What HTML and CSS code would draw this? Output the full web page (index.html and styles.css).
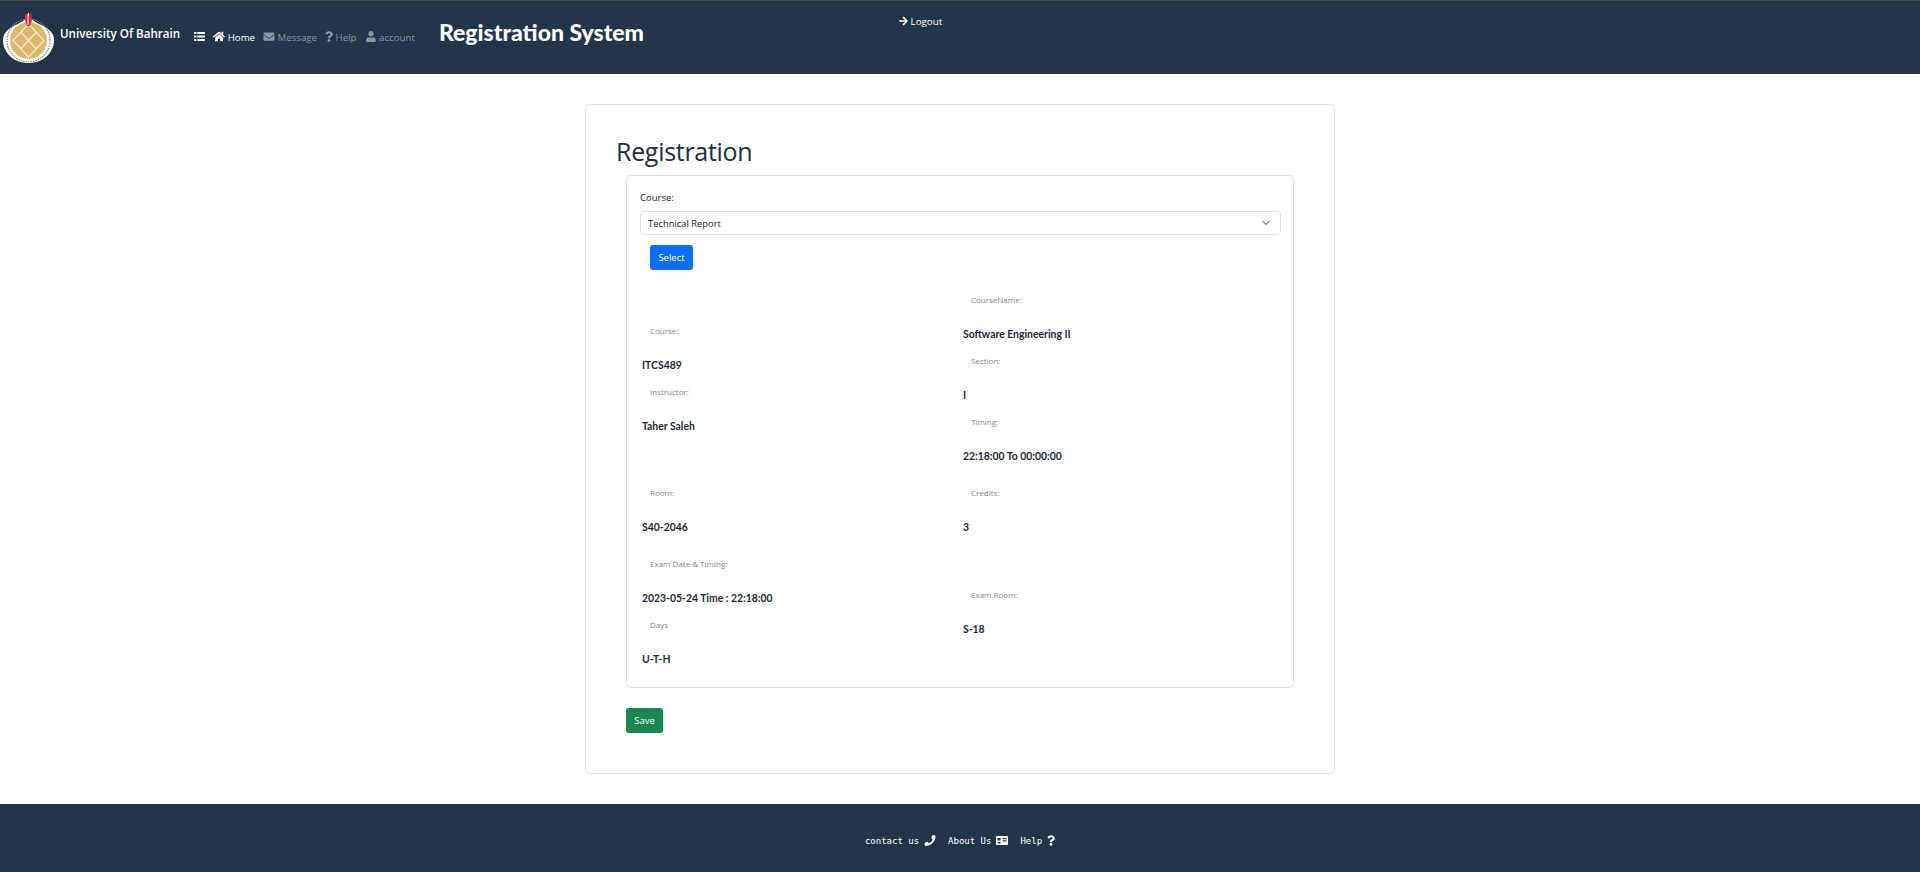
FILE: index.html

```html
<!DOCTYPE html>
<html lang="en">
<head>
  <meta charset="UTF-8" />
  <meta name="viewport" content="width=device-width, initial-scale=1.0" />
  <title>Registration System</title>
  <link rel="stylesheet" href="styles.css">
</head>
<body>
  <header class="topbar">
    <div class="brand">
      <svg class="logo" viewBox="0 0 52 52" width="52" height="52">
        <path d="M25.500 0C27 6 30 9 36 12C46 16 51 21 51 28C51 41 40 51 25.500 51C11 51 0 41 0 28C0 21 5 16 15 12C21 9 24 6 25.500 0Z" fill="#fff"/>
        <circle cx="25.500" cy="28.500" r="21.500" fill="none" stroke="#8a8672" stroke-width="1.200" stroke-dasharray="1.500 1"/>
        <circle cx="25.500" cy="28.500" r="18.500" fill="#dcbb70"/>
        <path d="M25.500 12L41 28.500L25.500 45L10 28.500ZM17.500 20L33.500 37M33.500 20L17.500 37" fill="none" stroke="#f6ecd2" stroke-width="1.200"/>
        <path d="M22 1L25 4L28 1L29 8L27 14H24L22 8Z" fill="#d8283c"/>
        <path d="M25 2V13" stroke="#fff" stroke-width="1"/>
      </svg>
      <span class="brand-name">University Of Bahrain</span>
    </div>
    <nav class="nav">
      <a class="nav-link nav-list">
        <svg class="icon icon-list" viewBox="0 0 12 10"><rect x="0" y="0" width="2.500" height="2.200"/><rect x="3.500" y="0" width="8.500" height="2.200"/><rect x="0" y="3.900" width="2.500" height="2.200"/><rect x="3.500" y="3.900" width="8.500" height="2.200"/><rect x="0" y="7.800" width="2.500" height="2.200"/><rect x="3.500" y="7.800" width="8.500" height="2.200"/></svg>
      </a>
      <a class="nav-link active">
        <svg class="icon" viewBox="0 0 576 512"><path d="M280.370 148.260L96 300.110V464a16 16 0 0 0 16 16l112.060-.29a16 16 0 0 0 15.920-16V368a16 16 0 0 1 16-16h64a16 16 0 0 1 16 16v95.640a16 16 0 0 0 16 16.050L464 480a16 16 0 0 0 16-16V300L295.670 148.260a12.190 12.190 0 0 0-15.300 0zM571.600 251.470L488 182.560V44.050a12 12 0 0 0-12-12h-56a12 12 0 0 0-12 12v72.610L318.470 43a48 48 0 0 0-61 0L4.340 251.470a12 12 0 0 0-1.600 16.900l25.500 31A12 12 0 0 0 45.150 301l235.220-193.740a12.190 12.190 0 0 1 15.300 0L530.900 301a12 12 0 0 0 16.900-1.600l25.500-31a12 12 0 0 0-1.700-16.930z"/></svg>
        Home
      </a>
      <a class="nav-link">
        <svg class="icon" viewBox="0 0 512 512"><path d="M502.300 190.800c3.900-3.100 9.700-.2 9.700 4.700V400c0 26.500-21.500 48-48 48H48c-26.500 0-48-21.500-48-48V195.600c0-5 5.700-7.800 9.700-4.700 22.400 17.400 52.100 39.500 154.100 113.600 21.100 15.400 56.700 47.800 92.200 47.600 35.700.3 72-32.800 92.300-47.600 102-74.100 131.600-96.300 154-113.700zM256 320c23.200.4 56.600-29.200 73.400-41.400 132.700-96.300 142.800-104.700 173.400-128.700 5.800-4.500 9.200-11.500 9.200-18.900v-19c0-26.500-21.500-48-48-48H48C21.500 64 0 85.500 0 112v19c0 7.400 3.400 14.300 9.200 18.900 30.600 23.900 40.700 32.400 173.400 128.700 16.800 12.200 50.200 41.800 73.400 41.400z"/></svg>
        Message
      </a>
      <a class="nav-link">
        <svg class="icon icon-q" viewBox="0 0 384 512"><path d="M202.021 0C122.202 0 70.503 32.703 29.914 91.026c-7.363 10.580-5.093 25.086 5.178 32.874l43.138 32.709c10.373 7.865 25.132 6.026 33.253-4.148 25.049-31.381 43.630-49.449 82.757-49.449 30.764 0 68.816 19.799 68.816 49.631 0 22.552-18.617 34.134-48.993 51.164-35.423 19.860-82.299 44.576-82.299 106.405V320c0 13.255 10.745 24 24 24h72.471c13.255 0 24-10.745 24-24v-5.773c0-42.860 125.268-44.645 125.268-160.627C377.504 66.256 286.902 0 202.021 0zM192 373.459c-38.196 0-69.271 31.075-69.271 69.271 0 38.195 31.075 69.270 69.271 69.270s69.271-31.075 69.271-69.271-31.075-69.270-69.271-69.270z"/></svg>
        Help
      </a>
      <a class="nav-link">
        <svg class="icon" viewBox="0 0 448 512"><path d="M224 256c70.700 0 128-57.300 128-128S294.700 0 224 0 96 57.300 96 128s57.300 128 128 128zm89.600 32h-16.700c-22.200 10.200-46.900 16-72.900 16s-50.600-5.800-72.900-16h-16.700C60.200 288 0 348.200 0 422.400V464c0 26.500 21.500 48 48 48h352c26.500 0 48-21.500 48-48v-41.600c0-74.200-60.200-134.400-134.400-134.400z"/></svg>
        account
      </a>
    </nav>
    <div class="system-title">Registration System</div>
    <a class="logout">
      <svg class="icon icon-arrow" viewBox="0 0 448 512"><path d="M190.500 66.900l22.200-22.200c9.400-9.400 24.600-9.400 33.900 0L441 239c9.400 9.400 9.400 24.600 0 33.900L246.600 467.300c-9.400 9.400-24.600 9.400-33.900 0l-22.200-22.200c-9.500-9.500-9.300-25 .4-34.300L311.400 296H24c-13.300 0-24-10.700-24-24v-32c0-13.300 10.700-24 24-24h287.400L190.900 101.200c-9.800-9.300-10-24.800-.4-34.300z"/></svg>
      Logout
    </a>
  </header>

  <main class="main">
    <section class="card">
      <h2 class="card-title">Registration</h2>
      <div class="panel">
        <label class="field-label" for="course">Course:</label>
        <div class="select-box" id="course">
          <span>Technical Report</span>
          <svg class="chevron" viewBox="0 0 16 16"><path d="M2 5l6 6 6-6" fill="none" stroke="#343a40" stroke-width="2" stroke-linecap="round" stroke-linejoin="round"/></svg>
        </div>
        <button class="btn btn-blue" type="button">Select</button>

        <div class="info-row info-first">
          <div class="info-col">
            <div class="item"><div class="item-label">Course:</div><div class="item-value">ITCS489</div></div>
            <div class="item"><div class="item-label">Instructor:</div><div class="item-value">Taher Saleh</div></div>
          </div>
          <div class="info-col">
            <div class="item"><div class="item-label">CourseName:</div><div class="item-value">Software Engineering II</div></div>
            <div class="item"><div class="item-label">Section:</div><div class="item-value">I</div></div>
            <div class="item"><div class="item-label">Timing:</div><div class="item-value">22:18:00 To 00:00:00</div></div>
          </div>
        </div>
        <div class="info-row">
          <div class="info-col">
            <div class="item"><div class="item-label">Room:</div><div class="item-value">S40-2046</div></div>
          </div>
          <div class="info-col">
            <div class="item"><div class="item-label">Credits:</div><div class="item-value">3</div></div>
          </div>
        </div>
        <div class="info-row">
          <div class="info-col">
            <div class="item"><div class="item-label">Exam Date &amp; Timing:</div><div class="item-value">2023-05-24 Time : 22:18:00</div></div>
            <div class="item"><div class="item-label">Days</div><div class="item-value">U-T-H</div></div>
          </div>
          <div class="info-col">
            <div class="item"><div class="item-label">Exam Room:</div><div class="item-value">S-18</div></div>
          </div>
        </div>
      </div>
      <button class="btn btn-green" type="button">Save</button>
    </section>
  </main>

  <footer class="footer">
    <a class="foot-link">contact us
      <svg class="icon" viewBox="0 0 512 512"><path d="M493.400 24.600l-104-24c-11.300-2.600-22.900 3.300-27.500 13.900l-48 112c-4.200 9.800-1.400 21.300 6.900 28l60.600 49.600c-36 76.700-98.900 140.500-177.200 177.200l-49.600-60.600c-6.800-8.300-18.200-11.100-28-6.900l-112 48C3.900 366.500-2 378.100.6 389.400l24 104C27.100 504.200 36.700 512 48 512c256.100 0 464-207.500 464-464 0-11.200-7.700-20.900-18.600-23.400z"/></svg>
    </a>
    <a class="foot-link">About Us
      <svg class="icon icon-card" viewBox="0 0 12 9"><path fill-rule="evenodd" d="M1 0H11A1 1 0 0 1 12 1V8A1 1 0 0 1 11 9H1A1 1 0 0 1 0 8V1A1 1 0 0 1 1 0ZM1.500 2V4.500H4.500V2ZM1.500 6V7.500H4.500V6ZM6.500 2V3.200H10.500V2ZM6.500 4.200V5.400H10.500V4.200Z"/></svg>
    </a>
    <a class="foot-link">Help
      <svg class="icon icon-q" viewBox="0 0 384 512"><path d="M202.021 0C122.202 0 70.503 32.703 29.914 91.026c-7.363 10.580-5.093 25.086 5.178 32.874l43.138 32.709c10.373 7.865 25.132 6.026 33.253-4.148 25.049-31.381 43.630-49.449 82.757-49.449 30.764 0 68.816 19.799 68.816 49.631 0 22.552-18.617 34.134-48.993 51.164-35.423 19.860-82.299 44.576-82.299 106.405V320c0 13.255 10.745 24 24 24h72.471c13.255 0 24-10.745 24-24v-5.773c0-42.860 125.268-44.645 125.268-160.627C377.504 66.256 286.902 0 202.021 0zM192 373.459c-38.196 0-69.271 31.075-69.271 69.271 0 38.195 31.075 69.270 69.271 69.270s69.271-31.075 69.271-69.271-31.075-69.270-69.271-69.270z"/></svg>
    </a>
  </footer>
</body>
</html>
```

FILE: styles.css

```css
* { box-sizing: border-box; }
body { margin: 0; font-family: "Open Sans", sans-serif; color: #212529; background: #fff; }

.icon { width: 12px; height: 11px; fill: currentColor; vertical-align: -1px; }
.icon-q { width: 8px; }
.icon-list { width: 11px; height: 9px; vertical-align: 0; }
.icon-arrow { width: 9px; height: 10px; }

/* top bar */
.topbar { display: flex; align-items: flex-start; height: 74px; background: #253549; border-top: 1px solid #444a50; color: #fff; }
.brand { display: flex; align-items: center; margin: 11px 0 0 3px; }
.logo { display: block; }
.brand-name { margin: -9px 0 0 5px; font-size: 11.600px; font-weight: 600; white-space: nowrap; }
.nav { display: flex; gap: 8px; margin: 30px 0 0 14px; font-size: 9.700px; }
.nav-link { color: #8b96a3; white-space: nowrap; }
.nav-link.active, .nav-list { color: #fff; }
.system-title { margin: 17px 0 0 24px; font-family: Lato, sans-serif; font-size: 23px; font-weight: 900; white-space: nowrap; }
.logout { margin: 14px 0 0 255px; font-size: 9.800px; white-space: nowrap; }

/* main card */
.main { display: flex; justify-content: center; padding: 30px 0; }
.card { width: 750px; height: 670px; padding: 28px 40px 0 30px; border: 1px solid #dee2e6; border-radius: 5px; }
.card-title { margin: 0 0 6px 0; font-size: 25px; font-weight: 500; letter-spacing: -.3px; line-height: 36px; color: #212d3f; }
.panel { width: 668px; height: 513px; margin-left: 10px; padding: 15px 13px 0 13px; border: 1px solid #dee2e6; border-radius: 5px; }
.field-label { display: block; font-size: 9.500px; line-height: 14px; color: #212529; }
.select-box { display: flex; align-items: center; justify-content: space-between; width: 641px; height: 24px; margin-top: 6px; padding: 0 10px 0 7px; border: 1px solid #dee2e6; border-radius: 4px; font-size: 9.400px; }
.chevron { width: 8px; height: 8px; }
.btn { display: block; height: 25px; border: 0; border-radius: 3px; color: #fff; font-family: "Open Sans", sans-serif; font-size: 9.500px; font-weight: 500; }
.btn-blue { width: 43px; margin: 10px 0 0 10px; padding: 0; background: #0d6efd; }
.btn-green { width: 37px; margin: 20px 0 0 10px; padding: 0; background: #198754; }

/* course details */
.info-row { display: grid; grid-template-columns: 321px 1fr; align-items: center; margin: 10px 0 0 2px; }
.info-first { margin-top: 21px; }
.item { height: 61px; padding-top: 3px; }
.item-label { margin-left: 8px; font-size: 8px; line-height: 11px; color: #7f8890; }
.item-value { margin-top: 21px; font-family: Lato, sans-serif; font-size: 10.400px; font-weight: 700; line-height: 16px; color: #1e2a3a; }

/* footer */
.footer { display: flex; justify-content: center; align-items: center; gap: 12px; height: 68px; padding-top: 5px; background: #253549; }
.foot-link { display: inline-flex; align-items: center; gap: 5px; font-family: "DejaVu Sans Mono", monospace; font-size: 9px; font-weight: 400; color: #fff; white-space: nowrap; }
.icon-card { width: 12px; height: 9px; }
```
